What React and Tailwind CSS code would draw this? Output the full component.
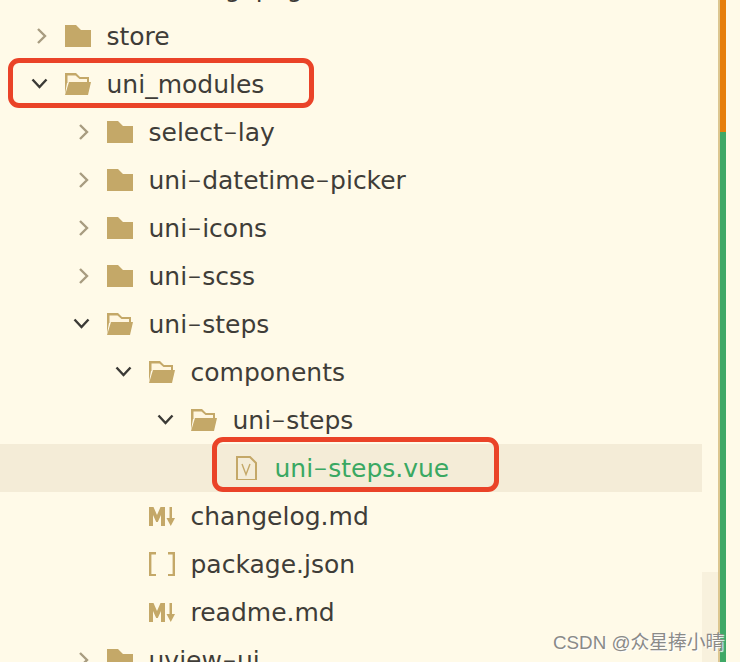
import React from 'react';

const tan = '#c4a868';

const Chevron = ({ open }) => (
  <svg width="24" height="24" viewBox="0 0 24 24" fill="none" strokeWidth="2.4" stroke={open ? '#3b3a36' : '#a89c80'}>
    {open ? <path d="M2.500 7.500l7 7.500 7-7.500" /> : <path d="M8 5l7 7-7 7" />}
  </svg>
);

const FolderClosed = () => (
  <svg width="28" height="24" viewBox="0 0 28 24">
    <path d="M1 1h11l5 5h10v17H1z" fill={tan} />
  </svg>
);

const FolderOpen = () => (
  <svg width="28" height="24" viewBox="0 0 28 24">
    <path d="M1 1h11l4 4h9v6H3L1 22z" fill={tan} />
    <path d="M3.500 3.500h8l4 3.500H23v4H3.500z" fill="#fff6df" />
    <path d="M1 23L5 10h22l-3 13z" fill={tan} />
  </svg>
);

const VueFile = () => (
  <svg width="28" height="24" viewBox="0 0 28 24" fill="none" stroke={tan} strokeWidth="2">
    <path d="M5 1h13l6 6v17H5z" />
    <path d="M10 8l4 10.500L18 8" strokeWidth="1.400" />
  </svg>
);

const MdFile = () => (
  <svg width="28" height="24" viewBox="0 0 28 24" fill={tan}>
    <path d="M1 22V3h4.500l3.500 8 3.500-8H17v19h-4V11l-3.200 7H8.200L5 11v11z" />
    <path d="M21.500 3H24v11h3l-4.250 8-4.250-8h3z" />
  </svg>
);

const JsonFile = () => (
  <svg width="28" height="24" viewBox="0 0 28 24" fill="none" stroke={tan} strokeWidth="2.400">
    <path d="M8 1.200H2.200v22H8M20 1.200h5.800v22H20" />
  </svg>
);

const icons = {
  closed: FolderClosed,
  open: FolderOpen,
  vue: VueFile,
  md: MdFile,
  json: JsonFile,
};

const rows = [
  { name: 'loading-page', depth: 1, icon: 'closed', arrow: 'right' },
  { name: 'store', depth: 0, icon: 'closed', arrow: 'right' },
  { name: 'uni_modules', depth: 0, icon: 'open', arrow: 'down' },
  { name: 'select-lay', depth: 1, icon: 'closed', arrow: 'right' },
  { name: 'uni-datetime-picker', depth: 1, icon: 'closed', arrow: 'right' },
  { name: 'uni-icons', depth: 1, icon: 'closed', arrow: 'right' },
  { name: 'uni-scss', depth: 1, icon: 'closed', arrow: 'right' },
  { name: 'uni-steps', depth: 1, icon: 'open', arrow: 'down' },
  { name: 'components', depth: 2, icon: 'open', arrow: 'down' },
  { name: 'uni-steps', depth: 3, icon: 'open', arrow: 'down' },
  { name: 'uni-steps.vue', depth: 4, icon: 'vue', selected: true },
  { name: 'changelog.md', depth: 2, icon: 'md' },
  { name: 'package.json', depth: 2, icon: 'json' },
  { name: 'readme.md', depth: 2, icon: 'md' },
  { name: 'uview-ui', depth: 1, icon: 'closed', arrow: 'right' },
];

// the hyphen is longer and thinner in the reference font
const FileName = ({ name }) => {
  const parts = name.split('-');
  return parts.map((part, i) => (
    <React.Fragment key={i}>
      {i > 0 && <span className="inline-block mx-[3px] scale-x-[1.6] scale-y-[0.8]">-</span>}
      {part}
    </React.Fragment>
  ));
};

const Row = ({ row }) => {
  const Icon = icons[row.icon];
  return (
    <div
      className={`flex items-center h-12 shrink-0 ${row.selected ? 'bg-[#f4ecd7]' : ''}`}
      style={{ paddingLeft: 30 + row.depth * 42 }}
    >
      <span className="w-6 h-6 shrink-0">{row.arrow && <Chevron open={row.arrow === 'down'} />}</span>
      <span className="ml-[10px] shrink-0 flex"><Icon /></span>
      <span className={`ml-[14.5px] text-[25px] leading-none whitespace-nowrap ${row.selected ? 'text-[#3aa862]' : 'text-[#3f3d38]'}`}>
        <FileName name={row.name} />
      </span>
    </div>
  );
};

export default function App() {
  return (
    <div className="relative flex w-[740px] h-[662px] overflow-hidden bg-[#fffae8] font-['DejaVu_Sans',sans-serif]">
      <div className="w-[702px] shrink-0 flex flex-col -mt-[36px]">
        {rows.map((row, i) => <Row key={i} row={row} />)}
      </div>

      {/* scrollbar + change markers */}
      <div className="w-[16px] shrink-0 flex flex-col">
        <div className="h-[572px] shrink-0" />
        <div className="flex-1 bg-[#f8f1dd]" />
      </div>
      <div className="w-[2px] shrink-0 bg-[#dcc690]" />
      <div className="w-[6px] shrink-0 flex flex-col">
        <div className="h-[132px] shrink-0 bg-[#e67e0c]" />
        <div className="flex-1 bg-[#3fa866]" />
      </div>

      {/* red annotations */}
      <div className="absolute left-[8px] top-[58px] w-[306px] h-[50px] border-[5px] border-[#ea4328] rounded-[11px]" />
      <div className="absolute left-[212px] top-[437px] w-[287px] h-[55px] border-[5px] border-[#ea4328] rounded-[11px]" />

      <div className="absolute left-[553px] top-[632px] text-[18.8px] leading-[22px] whitespace-nowrap text-[#8a8a88] [text-shadow:1px_1px_1px_#ffffff] font-['Liberation_Sans','Noto_Sans_CJK_SC',sans-serif]">
        CSDN @众星捧小晴
      </div>
    </div>
  );
}
